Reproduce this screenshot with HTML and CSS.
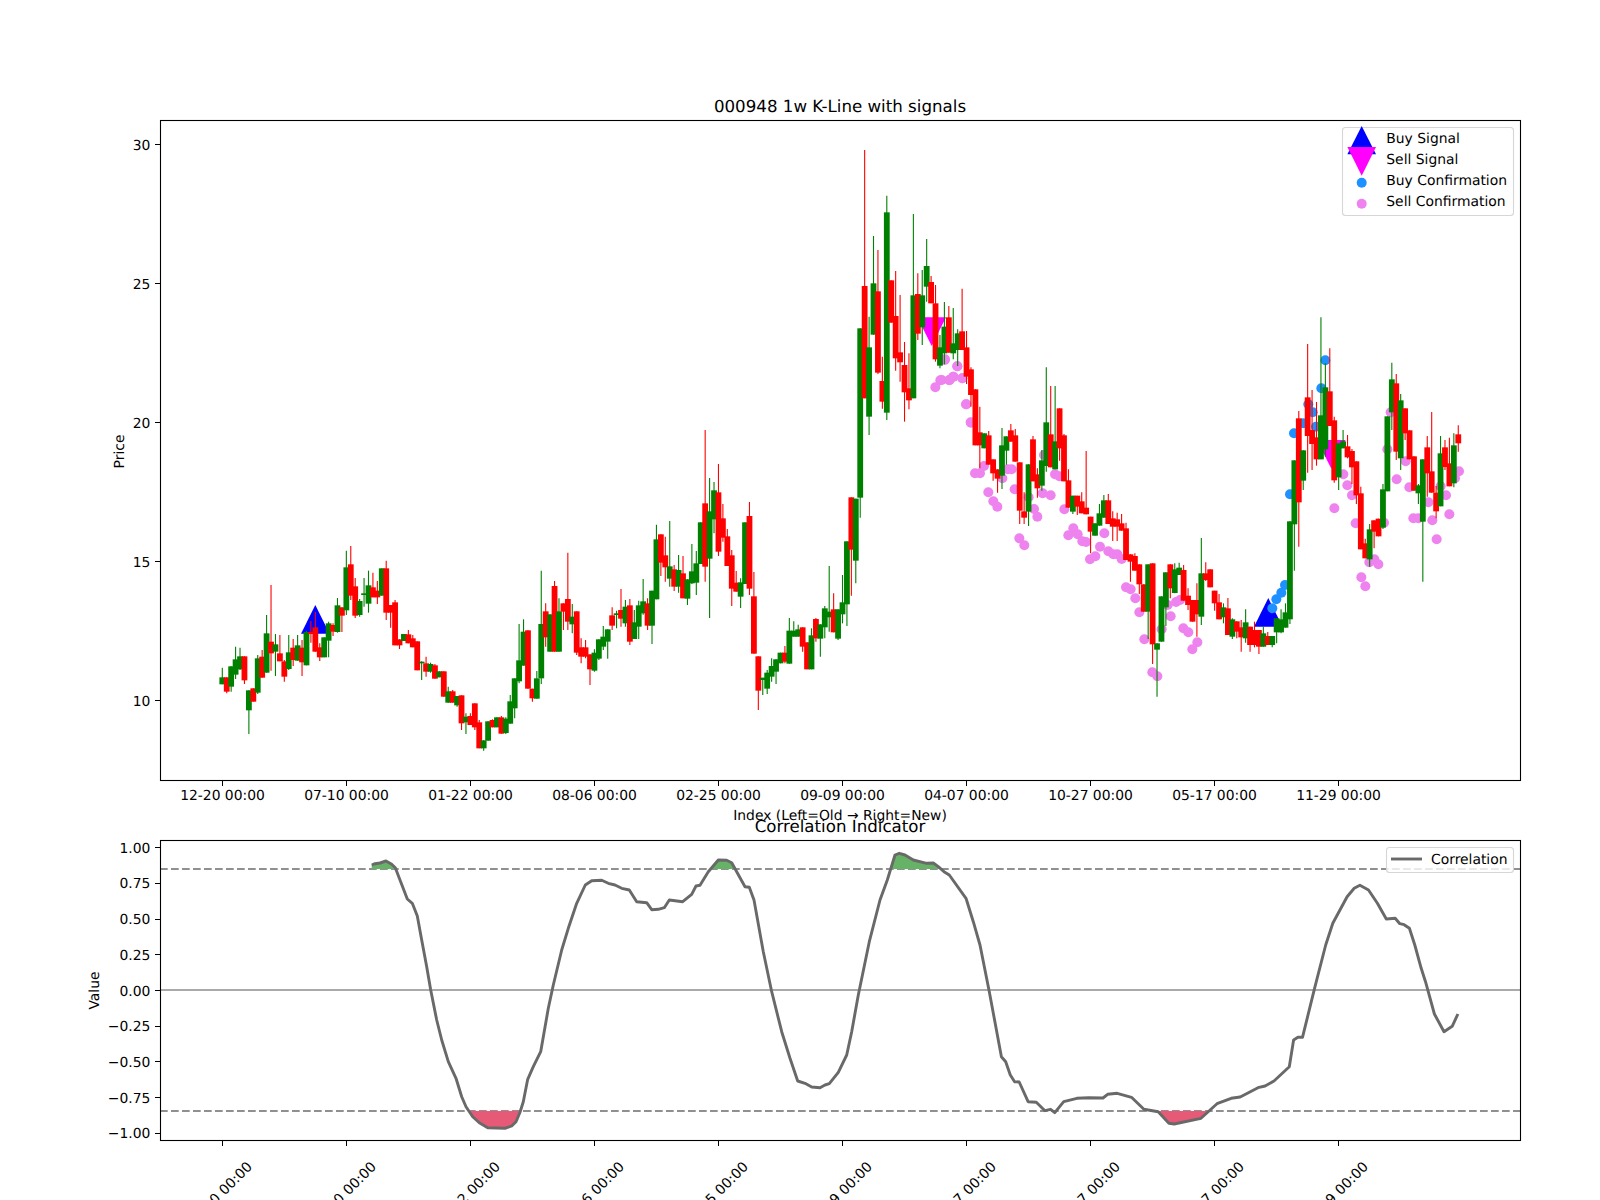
FILE: index.html
```html
<!DOCTYPE html>
<html lang="en">
<head>
<meta charset="utf-8">
<title>000948 1w K-Line with signals</title>
<link rel="stylesheet" href="styles.css">
</head>
<body>
<svg class="figure" id="figure" width="1600" height="1200" viewBox="0 0 1600 1200" xmlns="http://www.w3.org/2000/svg">
  <rect class="bg" x="0" y="0" width="1600" height="1200"/>
  <defs>
    <clipPath id="above"><rect x="160" y="841" width="1360" height="28"/></clipPath>
    <clipPath id="below"><rect x="160" y="1111" width="1360" height="29"/></clipPath>
  </defs>

  <!-- K-line axes -->
  <g id="signals">
    <polygon class="buy" points="315.3,605 301,633.7 329.6,633.7"/>
    <polygon class="buy" points="1268.3,598 1254,626.7 1282.6,626.7"/>
    <polygon class="sell" points="917.3,317.3 946,317.3 931.7,346"/>
    <polygon class="sell" points="1317,440 1345.6,440 1331.3,468.7"/>
  </g>
  <g id="dots"></g>
  <g id="candles"></g>
  <rect class="spine" x="160.5" y="120.5" width="1360" height="660"/>
  <path class="tick" d="M222.5 781v5M346.5 781v5M470.5 781v5M594.5 781v5M718.5 781v5M842.5 781v5M966.5 781v5M1090.5 781v5M1214.5 781v5M1338.5 781v5M155 144.5h5M155 283.5h5M155 422.5h5M155 561.5h5M155 700.5h5"/>
  <text class="label mid" x="840" y="112" id="title1">000948 1w K-Line with signals</text>
  <g class="ticklabels mid">
    <text x="222.5" y="800">12-20 00:00</text>
    <text x="346.5" y="800">07-10 00:00</text>
    <text x="470.5" y="800">01-22 00:00</text>
    <text x="594.5" y="800">08-06 00:00</text>
    <text x="718.5" y="800">02-25 00:00</text>
    <text x="842.5" y="800">09-09 00:00</text>
    <text x="966.5" y="800">04-07 00:00</text>
    <text x="1090.5" y="800">10-27 00:00</text>
    <text x="1214.5" y="800">05-17 00:00</text>
    <text x="1338.5" y="800">11-29 00:00</text>
  </g>
  <g class="ticklabels end">
    <text x="150.3" y="149.5">30</text>
    <text x="150.3" y="288.5">25</text>
    <text x="150.3" y="427.5">20</text>
    <text x="150.3" y="566.5">15</text>
    <text x="150.3" y="705.5">10</text>
  </g>
  <text class="ticklabels mid" x="840" y="820">Index (Left=Old → Right=New)</text>
  <text class="ticklabels mid" transform="translate(124 451.5) rotate(-90)">Price</text>

  <!-- legend -->
  <rect class="legend" x="1342.5" y="127.5" width="171" height="88" rx="3"/>
  <polygon class="buy" points="1361.7,126 1347.4,154.3 1376,154.3"/>
  <polygon class="sell" points="1347.4,147 1376,147 1361.7,175.7"/>
  <circle class="dot-buy" cx="1361.7" cy="182.7" r="5"/>
  <circle class="dot-sell" cx="1361.7" cy="203.7" r="5"/>
  <g class="ticklabels">
    <text x="1386.3" y="143">Buy Signal</text>
    <text x="1386.3" y="164">Sell Signal</text>
    <text x="1386.3" y="185">Buy Confirmation</text>
    <text x="1386.3" y="206">Sell Confirmation</text>
  </g>

  <!-- Correlation axes -->
  <line class="zero" x1="160" y1="990" x2="1520" y2="990"/>
  <line class="dash" x1="160" y1="869" x2="1520" y2="869"/>
  <line class="dash" x1="160" y1="1111" x2="1520" y2="1111"/>
  <polygon id="fillup" class="fill-up" clip-path="url(#above)" points=""/>
  <polygon id="filldown" class="fill-down" clip-path="url(#below)" points=""/>
  <polyline id="corr" class="corr" points=""/>
  <rect class="spine" x="160.5" y="840.5" width="1360" height="300"/>
  <path class="tick" d="M222.5 1141v5M346.5 1141v5M470.5 1141v5M594.5 1141v5M718.5 1141v5M842.5 1141v5M966.5 1141v5M1090.5 1141v5M1214.5 1141v5M1338.5 1141v5M155 847.5h5M155 883.5h5M155 919.5h5M155 954.5h5M155 990.5h5M155 1026.5h5M155 1061.5h5M155 1097.5h5M155 1133.5h5"/>
  <text class="label mid" x="840" y="831.7">Correlation Indicator</text>
  <g class="ticklabels end">
    <text x="150.3" y="852.7">1.00</text>
    <text x="150.3" y="888.4">0.75</text>
    <text x="150.3" y="924.1">0.50</text>
    <text x="150.3" y="959.8">0.25</text>
    <text x="150.3" y="995.5">0.00</text>
    <text x="150.3" y="1031.2">−0.25</text>
    <text x="150.3" y="1066.9">−0.50</text>
    <text x="150.3" y="1102.6">−0.75</text>
    <text x="150.3" y="1138.3">−1.00</text>
  </g>
  <text class="ticklabels mid" transform="translate(99 990.5) rotate(-90)">Value</text>
  <g class="ticklabels mid">
    <text transform="translate(219.5 1194) rotate(-45)" y="5">12-20 00:00</text>
    <text transform="translate(343.5 1194) rotate(-45)" y="5">07-10 00:00</text>
    <text transform="translate(467.5 1194) rotate(-45)" y="5">01-22 00:00</text>
    <text transform="translate(591.5 1194) rotate(-45)" y="5">08-06 00:00</text>
    <text transform="translate(715.5 1194) rotate(-45)" y="5">02-25 00:00</text>
    <text transform="translate(839.5 1194) rotate(-45)" y="5">09-09 00:00</text>
    <text transform="translate(963.5 1194) rotate(-45)" y="5">04-07 00:00</text>
    <text transform="translate(1087.5 1194) rotate(-45)" y="5">10-27 00:00</text>
    <text transform="translate(1211.5 1194) rotate(-45)" y="5">05-17 00:00</text>
    <text transform="translate(1335.5 1194) rotate(-45)" y="5">11-29 00:00</text>
  </g>
  <rect class="legend" x="1386.5" y="847.5" width="127" height="25" rx="3"/>
  <line class="corr" x1="1391" y1="859" x2="1422" y2="859"/>
  <text class="ticklabels" x="1431" y="864">Correlation</text>
</svg>
<script src="chart.js"></script>
</body>
</html>
```

FILE: styles.css
```css
html, body {
  margin: 0;
  padding: 0;
  background: #fff;
}
.figure {
  display: block;
  font-family: "DejaVu Sans", sans-serif;
  text-rendering: geometricPrecision;
}
.bg { fill: #fff; }
.spine { fill: none; stroke: #000; stroke-width: 1.1; }
.tick { fill: none; stroke: #000; stroke-width: 1; }
.label { font-size: 16.67px; fill: #000; }
.ticklabels { font-size: 13.89px; fill: #000; }
.mid { text-anchor: middle; }
.end { text-anchor: end; }
.buy { fill: #0000ff; }
.sell { fill: #ff00ff; }
.dot-buy { fill: #1e90ff; }
.dot-sell { fill: #ee82ee; }
.wick-r { stroke: #ff0000; stroke-width: 1.1; }
.wick-g { stroke: #008000; stroke-width: 1.1; }
.body-r { fill: #ff0000; }
.body-g { fill: #008000; }
.legend { fill: rgba(255, 255, 255, 0.8); stroke: #d6d6d6; stroke-width: 1.1; }
.zero { stroke: #aaaaaa; stroke-width: 1.8; }
.dash { stroke: #909090; stroke-width: 2.08; stroke-dasharray: 7.7 3.3; }
.corr { fill: none; stroke: #696969; stroke-width: 2.9; stroke-linejoin: round; }
.fill-up { fill: #66b266; }
.fill-down { fill: #e75a77; }
```

FILE: chart.js
```js
var NS = "http://www.w3.org/2000/svg";
function el(parent, name, cls, attrs) {
  var e = document.createElementNS(NS, name);
  e.setAttribute("class", cls);
  for (var k in attrs) e.setAttribute(k, attrs[k]);
  parent.appendChild(e);
  return e;
}

/* candles: colour + body top, body bottom, wick top, wick bottom, read in crop units (y = oy + v / 3) */
var segments = [
  [480, "g592,613,563,613 r592,635,592,640 g559,620,559,635 g538,584,500,597 g529,568,503,570 r529,601,529,612 g631,691,631,762 r625,665,625,665 g535,638,525,642 r530,593,510,593 g460,578,405,578 r485,520,315,572 g493,515,462,588 r520,544,465,544 r544,590,540,605 g517,567,465,570 r503,540,477,558 g496,542,465,542 r503,547,480,588 g456,556,452,556 r456,462,423,488 r442,515,396,515 r502,532,490,543 g472,532,472,532 g430,482,425,532 r435,455,430,468 g376,456,354,458 r382,407,382,456 g262,391,212,405 r253,347,198,360 r319,407,294,414 g363,405,357,410 g340,345,294,380 g316,371,272,398 r322,352,278,352 r332,352,303,372 g265,347,265,347 r265,398,242,420 r375,398,375,443 r367,496,360,496 r478,496,478,507 g462,483,462,483 r463,490,450,490 r475,502,465,502 r484,571,484,571 g545,550,544,600 r550,575,530,590 g552,575,548,578 r556,596,552,596 g574,592,574,592 r574,650,574,650 g634,668,620,668 r634,668,630,668 g648,676,648,680 r646,730,646,750 g710,727,700,762 r708,735,700,735 r670,742,670,750 r727,805,720,805 g781,805,781,812 g724,782,724,782 r720,742,718,742 g712,742,712,742 r712,761,708,761 g716,759,712,762 g664,731,645,731 g595,685,595,715 g541,604,432,610 g455,557,418,557 r451,626,451,626 r626,655,626,665 g595,656,573,656 g432,595,272,612 r394,472,370,500 g403,515,403,515"],
  [380, "r618,815,603,815 g694,815,655,815 r670,695,670,750 r657,725,518,750 g710,733,672,760 r694,818,694,825 r802,830,775,850 r802,830,780,835 r823,868,823,915 g818,872,808,875 g778,836,778,840 g770,800,738,810 g748,785,748,836 r706,737,682,750 g700,705,692,745 r690,716,627,740 g680,730,660,740 r676,785,657,795 g727,777,690,777 g676,740,662,777 g664,700,597,704 r670,737,655,750 g632,737,632,792 g478,658,434,658 r463,548,463,588 r526,562,470,605 g559,596,423,620 r568,620,555,633 g570,620,525,638 r580,655,528,655 g598,656,598,675 g574,610,492,612 g550,608,513,645 g427,552,427,552 r370,560,150,605 g394,536,294,714 g331,418,306,460 r337,515,252,528 r415,473,372,485 r469,558,447,558 r526,626,510,678 r608,635,573,635 g607,650,595,684 g427,612,427,612 r408,626,366,645 r649,821,576,821 r829,932,829,990 g893,900,893,945 g878,926,870,942 g858,890,835,905 g838,875,838,912 g818,850,818,850 r818,845,798,850 g752,851,714,851 g752,770,724,770 g748,770,734,770 r742,800,742,815 r787,868,787,868 g766,868,745,868 r717,775,714,785 g733,776,733,830 g685,742,678,775 g695,712,558,755 r688,757,640,757 g688,776,688,780 g667,703,585,730 g484,673,484,738 r352,509,352,647 g356,542,356,610"],
  [130, "g595,1103,595,1163 r468,805,60,805 g652,860,560,915 g460,614,318,614 r484,728,360,732 r753,815,680,836 g247,848,197,870 r451,578,451,578 r558,685,423,722 r667,697,495,755 r705,787,636,875 r775,811,670,838 g496,805,252,805 r492,611,430,630 g496,592,420,645 g408,470,327,515 r456,520,438,520 r520,688,465,695 g652,707,615,715 g590,670,516,703 r562,668,528,668 g640,670,534,688 g610,660,598,708 r604,660,476,660 r652,740,603,762 r718,795,712,830"],
  [340, "r148,316,148,316 r277,316,200,385 g280,325,280,325 r286,374,273,374 r358,400,358,422 r388,416,388,458 g316,407,264,447 g289,332,289,374 r271,305,252,305 r286,365,267,365 r367,512,367,552 r514,533,457,552 g373,515,373,558 r298,424,288,424 r403,445,385,473 g361,437,330,452 g247,378,82,395 r283,382,138,382 g304,388,138,388 r205,325,205,362 r286,424,282,424 r421,503,388,503 g467,515,467,522 r467,500,467,525 r484,520,457,520 r503,523,333,523 r530,575,530,640 g550,587,550,587 g520,557,492,557 g481,533,465,533 r481,552,462,552 r535,560,514,603 r538,560,518,603 r550,572,522,572 r565,660,548,660 r643,665,643,725 r648,692,640,692 r673,733,673,762 r733,815,733,815 g673,815,673,897 r670,913,670,972 g910,929,910,1070 g769,905,769,905 g697,802,697,858 r673,745,673,775 g688,759,670,760"],
  [400, "g503,525,488,525 r510,602,495,602 r587,615,565,630 r600,665,600,665 r600,643,550,710 g520,650,414,675 r520,540,487,543 r508,562,508,562 r572,610,572,632 r607,658,582,658 g622,652,610,670 r625,705,594,705 g658,710,655,717 r664,695,664,715 r682,712,660,755 g667,715,628,728 r680,735,680,755 r690,735,665,742 r690,740,690,762 g700,740,680,740 r708,735,696,735 g708,735,708,742 g655,697,655,730 g658,697,628,700 g637,683,610,683"],
  [300, "g664,958,664,972 g481,673,481,812 r355,607,333,740 g451,542,451,570 r292,408,132,518 r390,432,270,510 r412,478,306,497 g346,478,52,478 g262,448,190,470 r274,378,145,378 r361,541,350,548 g430,532,430,570 g424,445,390,445 r439,472,405,475 r453,502,447,552 r484,586,484,612 r580,748,560,748 r730,775,716,775 g688,778,672,800 r661,695,661,745 r656,709,656,709 g568,683,552,687 g349,574,349,574 g238,337,188,390 r250,455,222,480 g301,475,282,510 r325,400,325,420 r391,478,391,478 r469,572,469,572 g556,580,552,612 g478,665,478,845 r442,520,408,590 r514,578,336,578 r578,634,558,655 g460,619,408,619 r442,501,420,510 r490,559,413,559 g436,550,400,562 r403,430,376,455"]
];

var STEP = 4.43, X0 = 222.3, BODY = 5.8;
var candles = document.getElementById("candles");
var index = 0;
segments.forEach(function (seg) {
  var oy = seg[0];
  seg[1].split(" ").forEach(function (tok) {
    var c = tok.charAt(0);
    var v = tok.slice(1).split(",").map(function (n) { return oy + parseFloat(n) / 3; });
    var x = X0 + STEP * index;
    el(candles, "line", "wick-" + c, { x1: x, x2: x, y1: v[2], y2: v[3] });
    el(candles, "rect", "body-" + c, { x: x - BODY / 2, y: v[0], width: BODY, height: Math.max(v[1] - v[0], 1) });
    index++;
  });
});

/* confirmation dots: crop origin, then crop points */
var sellDots = [
  [830, 130, "316,772 331,751 358,751 370,740 345,688 382,709 397,745 408,823 423,878"],
  [940, 340, "14,60 52,79 5,120 28,120 40,110 67,115 79,193 92,247 132,378 105,400 120,400 145,457 160,484 172,500 187,415 203,388 215,388 224,448 266,472 282,507 292,530 238,595 253,616 308,460 332,466 312,345 345,403 358,409 373,508 400,565 385,586 413,583 427,604 438,606 450,658 466,649"],
  [1100, 400, "13,400 0,440 25,454 40,463 52,463 65,477 78,562 92,568 106,595 118,637 133,718 157,817 172,829 185,688 212,649 228,606 240,600 203,615 250,685 265,697 292,727 277,748"],
  [1240, 300, "310,523 322,556 336,586 283,625 347,670 388,787 403,778 415,793 364,832 376,859 432,668 442,448 452,337 470,538 497,484 508,562 565,607 520,655 535,655 577,661 590,718 628,643 618,586 602,559 645,535 657,514"]
];
var buyDots = [
  [1100, 400, "517,625 529,598 544,578 555,555"],
  [1240, 300, "150,583 162,400 190,370 205,313 218,337 228,380 244,265 256,181"]
];
var dots = document.getElementById("dots");
function drawDots(list, cls) {
  list.forEach(function (s) {
    s[2].split(" ").forEach(function (p) {
      var q = p.split(",");
      el(dots, "circle", cls, { cx: s[0] + q[0] / 3, cy: s[1] + q[1] / 3, r: 5 });
    });
  });
}
drawDots(sellDots, "dot-sell");
drawDots(buyDots, "dot-buy");

/* correlation line */
var parts = [
  [0, 800, 3, "1115,195 1125,191 1140,189 1158,183 1175,193 1186,203 1200,240 1222,297 1237,310 1252,348 1265,420 1280,500 1292,570 1310,660 1325,720 1345,785 1368,835 1385,890 1398,920 1418,950 1438,968 1463,983"],
  [480, 835, 3, "75,880 95,873 108,860 120,832 130,800 143,733 160,695 182,650 205,520 220,450 245,345 265,280 290,205 316,150 335,137 365,136 385,145 405,150 425,160 448,165 470,200 500,203 515,224 535,223 553,218 568,195 608,200 635,178 648,153 660,151 685,110 715,75 740,76 755,83 795,155 808,157 822,195 850,350 875,470 905,590 930,670 953,738 975,745 995,756 1020,758 1035,750 1048,746 1075,712 1100,660 1115,590 1135,480 1168,320 1200,195 1222,135 1245,60 1258,55 1275,60 1300,75 1340,85 1360,84 1375,95 1392,110 1408,120 1458,190 1480,260 1500,330 1528,470"],
  [980, 835, 2.806, "60,665 72,680 85,720 97,740 110,741 135,800 158,802 182,827 198,823 210,833 235,800 272,790 305,788 345,789 358,778 385,775 425,787 460,823 500,830 530,865 545,867 620,850 665,806 705,790 730,786 780,758 800,753 825,738 868,695 880,615 892,607 905,607 940,455 970,330 990,265 1030,185 1050,160 1066,151 1090,165 1115,205 1140,252 1165,250 1178,266 1190,269 1205,280 1220,330 1238,400 1250,440 1275,537 1302,590 1325,574 1341,537"]
];
var pts = [];
parts.forEach(function (s) {
  s[3].split(" ").forEach(function (p) {
    var q = p.split(",");
    pts.push([+(s[0] + q[0] / s[2]).toFixed(1), +(s[1] + q[1] / 3).toFixed(1)]);
  });
});
var line = pts.map(function (p) { return p.join(","); }).join(" ");
var first = pts[0][0], last = pts[pts.length - 1][0];
document.getElementById("corr").setAttribute("points", line);
document.getElementById("fillup").setAttribute("points", line + " " + last + ",869 " + first + ",869");
document.getElementById("filldown").setAttribute("points", line + " " + last + ",1111 " + first + ",1111");
```
